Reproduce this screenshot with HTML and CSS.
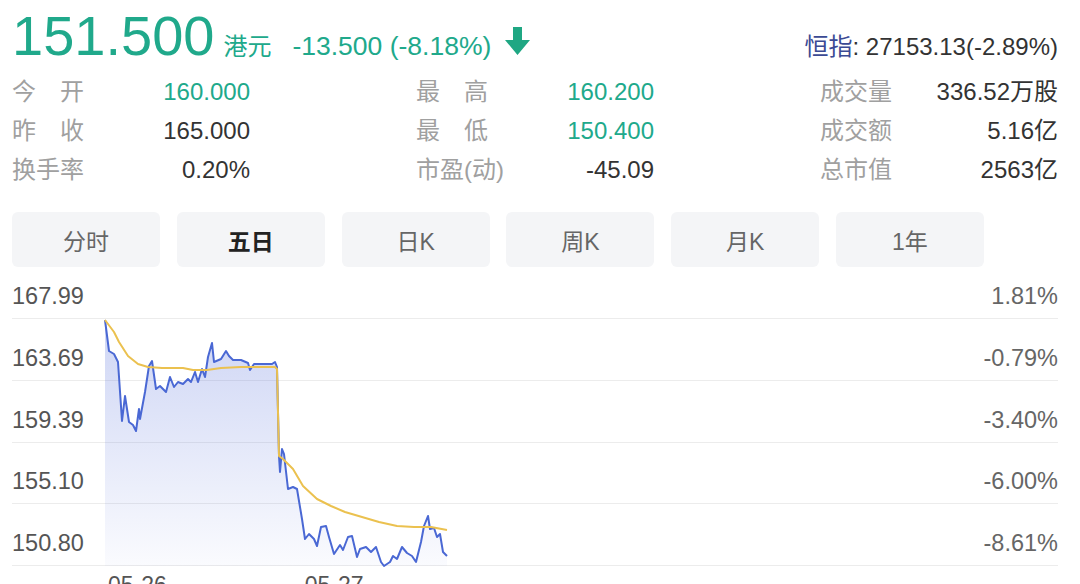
FILE: index.html
```html
<!DOCTYPE html>
<html>
<head>
  <link rel="stylesheet" href="styles.css">
</head>
<body>
  <div class="page">
    <div class="quote-head">
      <span class="price">151.500</span>
      <span class="unit">港元</span>
      <span class="change">-13.500 (-8.18%)</span>
      <svg class="arrow" width="25" height="28" viewBox="0 0 25 28">
        <path d="M8 0h9v13h8L12.5 28 0 13h8z" fill="#1fa783"/>
      </svg>
      <span class="index"><span class="index-name">恒指</span>: 27153.13(-2.89%)</span>
    </div>

    <div class="stats">
      <div class="stat"><span class="label">今开</span><span class="value up">160.000</span></div>
      <div class="stat"><span class="label">最高</span><span class="value up">160.200</span></div>
      <div class="stat"><span class="label">成交量</span><span class="value">336.52万股</span></div>
      <div class="stat"><span class="label">昨收</span><span class="value">165.000</span></div>
      <div class="stat"><span class="label">最低</span><span class="value up">150.400</span></div>
      <div class="stat"><span class="label">成交额</span><span class="value">5.16亿</span></div>
      <div class="stat"><span class="label">换手率</span><span class="value">0.20%</span></div>
      <div class="stat"><span class="label">市盈(动)</span><span class="value">-45.09</span></div>
      <div class="stat"><span class="label">总市值</span><span class="value">2563亿</span></div>
    </div>

    <div class="tabs">
      <div class="tab">分时</div>
      <div class="tab active">五日</div>
      <div class="tab">日K</div>
      <div class="tab">周K</div>
      <div class="tab">月K</div>
      <div class="tab">1年</div>
    </div>

    <div class="chart">
      <div class="chart-row first"><span>167.99</span><span class="pct">1.81%</span></div>
      <div class="chart-row"><span>163.69</span><span class="pct">-0.79%</span></div>
      <div class="chart-row"><span>159.39</span><span class="pct">-3.40%</span></div>
      <div class="chart-row"><span>155.10</span><span class="pct">-6.00%</span></div>
      <div class="chart-row"><span>150.80</span><span class="pct">-8.61%</span></div>
      <div class="x-axis"><span>05-26</span><span>05-27</span></div>

      <!-- drawn in page coordinates -->
      <svg class="plot" width="1046" height="316" viewBox="12 268 1046 316">
        <defs>
          <linearGradient id="area" gradientUnits="userSpaceOnUse" x1="0" y1="320" x2="0" y2="567">
            <stop offset="0" stop-color="#5a73dc" stop-opacity="0.30"/>
            <stop offset="1" stop-color="#5a73dc" stop-opacity="0.03"/>
          </linearGradient>
        </defs>
        <polygon fill="url(#area)" points="105,321 109,352 114,355 118,363 122,422 125,397 129,423 133,426 136,432 139,410 140,420 145,393 149,367 152,362 156,390 160,387 166,393 170,378 174,388 178,383 183,385 188,380 191,383 195,373 198,383 202,370 205,378 208,358 212,344 214,363 221,360 226,352 229,357 233,361 241,361 248,364 250,371 254,365 262,365 272,365 275,363 277,368 279,457 280,473 282,450 284,455 288,490 293,488 297,490 302,520 305,540 309,535 314,540 317,547 321,528 326,527 329,538 334,555 340,546 343,551 348,538 352,537 357,558 360,550 366,548 371,553 376,548 381,563 384,567 390,563 393,557 397,560 402,548 407,554 412,557 416,563 421,543 424,527 428,517 430,530 434,529 437,538 440,535 443,553 447,557 447,567 105,567"/>
        <polyline fill="none" stroke="#4a68d4" stroke-width="2" stroke-linejoin="round" points="105,321 109,352 114,355 118,363 122,422 125,397 129,423 133,426 136,432 139,410 140,420 145,393 149,367 152,362 156,390 160,387 166,393 170,378 174,388 178,383 183,385 188,380 191,383 195,373 198,383 202,370 205,378 208,358 212,344 214,363 221,360 226,352 229,357 233,361 241,361 248,364 250,371 254,365 262,365 272,365 275,363 277,368 279,457 280,473 282,450 284,455 288,490 293,488 297,490 302,520 305,540 309,535 314,540 317,547 321,528 326,527 329,538 334,555 340,546 343,551 348,538 352,537 357,558 360,550 366,548 371,553 376,548 381,563 384,567 390,563 393,557 397,560 402,548 407,554 412,557 416,563 421,543 424,527 428,517 430,530 434,529 437,538 440,535 443,553 447,557"/>
        <polyline fill="none" stroke="#ebc14f" stroke-width="2" stroke-linejoin="round" points="105,321 114,333 119,343 128,357 138,365 148,368 162,369 183,369 193,371 207,371 221,369 241,368 275,368 277,370 279,457 283,460 293,470 303,487 317,500 331,507 345,513 362,518 379,523 397,527 414,528 431,528 447,531"/>
      </svg>
    </div>
  </div>
</body>
</html>
```

FILE: styles.css
```css
body {
  margin: 0;
  font-family: "Liberation Sans", "Noto Sans CJK SC", sans-serif;
  color: #333;
  background: #fff;
  overflow: hidden;
}
.page {
  padding: 5px 22px 0 12px;
}
.quote-head {
  display: flex;
  align-items: baseline;
  height: 62px;
  margin-bottom: 5px;
}
.price {
  font-size: 56px;
  line-height: 62px;
  color: #20a98b;
}
.unit {
  font-size: 24px;
  color: #20a98b;
  margin-left: 9px;
}
.change {
  font-size: 26.5px;
  color: #20a98b;
  margin-left: 21px;
}
.arrow {
  margin-left: 14px;
  margin-bottom: -3px;
}
.index {
  margin-left: auto;
  font-size: 24px;
  color: #333;
}
.index-name {
  color: #3b4a94;
}
.stats {
  display: grid;
  grid-template-columns: repeat(3, 238px);
  column-gap: 166px;
  font-size: 24px;
  line-height: 39px;
}
.stat {
  display: flex;
  justify-content: space-between;
}
.label {
  display: inline-block;
  min-width: 72px;
  text-align-last: justify;
  color: #a0a0a0;
}
.value {
  color: #333;
}
.value.up {
  color: #20a98b;
}
.tabs {
  display: flex;
  gap: 16.8px;
  margin-top: 23px;
}
.tab {
  width: 148px;
  height: 55px;
  display: flex;
  align-items: center;
  justify-content: center;
  background: #f4f5f7;
  border-radius: 6px;
  font-size: 23px;
  color: #666;
}
.tab.active {
  font-weight: bold;
  color: #222;
}
.chart {
  position: relative;
}
.chart-row {
  display: flex;
  justify-content: space-between;
  align-items: flex-end;
  box-sizing: border-box;
  height: 61.75px;
  padding-bottom: 10px;
  border-bottom: 1px solid #ececec;
  font-size: 23.5px;
  line-height: 24px;
  color: #555;
}
.chart-row.first {
  height: 52px;
}
.pct {
  color: #666;
}
.x-axis {
  display: flex;
  gap: 138px;
  padding: 7px 0 0 96px;
  font-size: 23px;
  line-height: 24px;
  color: #555;
}
.plot {
  position: absolute;
  left: 0;
  top: 0;
}
```
